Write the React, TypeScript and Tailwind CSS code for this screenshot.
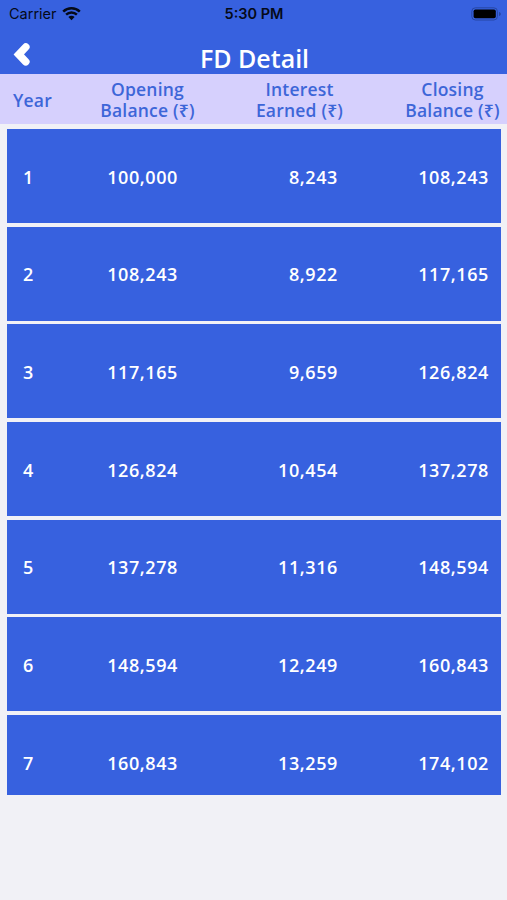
interface IDepositYear {
  year: number;
  opening: string;
  interest: string;
  closing: string;
}

const years: IDepositYear[] = [
  { year: 1, opening: '100,000', interest: '8,243', closing: '108,243' },
  { year: 2, opening: '108,243', interest: '8,922', closing: '117,165' },
  { year: 3, opening: '117,165', interest: '9,659', closing: '126,824' },
  { year: 4, opening: '126,824', interest: '10,454', closing: '137,278' },
  { year: 5, opening: '137,278', interest: '11,316', closing: '148,594' },
  { year: 6, opening: '148,594', interest: '12,249', closing: '160,843' },
  { year: 7, opening: '160,843', interest: '13,259', closing: '174,102' },
];

function WifiIcon() {
  return (
    <svg className="h-[15px] w-[19px]" viewBox="0 0 19 15" fill="none" stroke="#050a18" strokeWidth="2.5">
      <path d="M1.2 5.6a11.9 11.9 0 0 1 16.6 0" />
      <path d="M4.1 8.7a7.8 7.8 0 0 1 10.8 0" />
      <path d="M9.5 14.2 6.4 11.1a4.4 4.4 0 0 1 6.2 0Z" fill="#050a18" stroke="none" />
    </svg>
  );
}

function BatteryIcon() {
  return (
    <svg className="h-[14px] w-[31px]" viewBox="0 0 31 14">
      <rect x="0.8" y="0.8" width="25.6" height="12.2" rx="3.6" fill="none" stroke="#2747a4" strokeWidth="1" />
      <rect x="2.6" y="2.5" width="22.2" height="8.8" rx="1.8" fill="#000" />
      <path d="M28 5v4c1.1-.4 1.8-1.1 1.8-2S29.1 5.4 28 5Z" fill="#2747a4" />
    </svg>
  );
}

function StatusBar() {
  return (
    <div className="grid h-[27px] grid-cols-3 items-center pr-[5px] pl-[9px] font-['Inter',sans-serif] text-[#050a18]">
      <div className="flex items-center gap-[5px]">
        <span className="text-[14.5px] leading-[27px]">Carrier</span>
        <WifiIcon />
      </div>
      <span className="pr-[3px] text-center text-[14.5px] leading-[27px] font-semibold">5:30 PM</span>
      <div className="flex justify-end">
        <BatteryIcon />
      </div>
    </div>
  );
}

function TitleBar() {
  return (
    <div className="grid h-[47px] grid-cols-[60px_1fr_60px] pl-[12px]">
      <button type="button" aria-label="Back" className="flex items-start pt-[15px]">
        <svg className="h-[25px] w-[19px]" viewBox="0 0 19 25" fill="none" stroke="#fff" strokeWidth="7.6" strokeLinecap="round" strokeLinejoin="miter">
          <path d="M13.8 5 6.8 12.4l7 7.4" />
        </svg>
      </button>
      <h1 className="pt-[14px] pr-[10px] text-center text-[25px] leading-[34px] font-semibold text-white">
        FD Detail
      </h1>
    </div>
  );
}

function ColumnHeads() {
  return (
    <div className="flex h-[49.5px] items-center bg-[#d6d0fd] pt-[3px] text-center text-[17.5px] leading-[21px] font-semibold tracking-[0.2px] text-[#3d66d8]">
      <div className="w-[65px]">Year</div>
      <div className="w-[165px]">Opening<br />Balance (₹)</div>
      <div className="w-[139px]">Interest<br />Earned (₹)</div>
      <div className="w-[138px] pl-[29px]">Closing<br />Balance (₹)</div>
    </div>
  );
}

export default function App() {
  return (
    <div className="h-[900px] w-[507px] overflow-hidden bg-[#f1f1f6] font-['Open_Sans','Noto_Sans',sans-serif]">
      <header className="bg-[#3761df]">
        <StatusBar />
        <TitleBar />
      </header>
      <ColumnHeads />
      <main className="mx-[7px] mt-[5.5px] flex h-[666px] w-[494px] flex-col gap-[3.67px] overflow-hidden">
        {years.map((row) => (
          <div
            key={row.year}
            className="flex h-[94px] shrink-0 items-center bg-[#3761df] pt-[2.4px] text-right text-[18px] font-semibold tracking-[0.6px] text-white"
          >
            <div className="w-[43px] text-center">{row.year}</div>
            <div className="w-[128px]">{row.opening}</div>
            <div className="w-[160px]">{row.interest}</div>
            <div className="w-[151px]">{row.closing}</div>
          </div>
        ))}
      </main>
    </div>
  );
}
